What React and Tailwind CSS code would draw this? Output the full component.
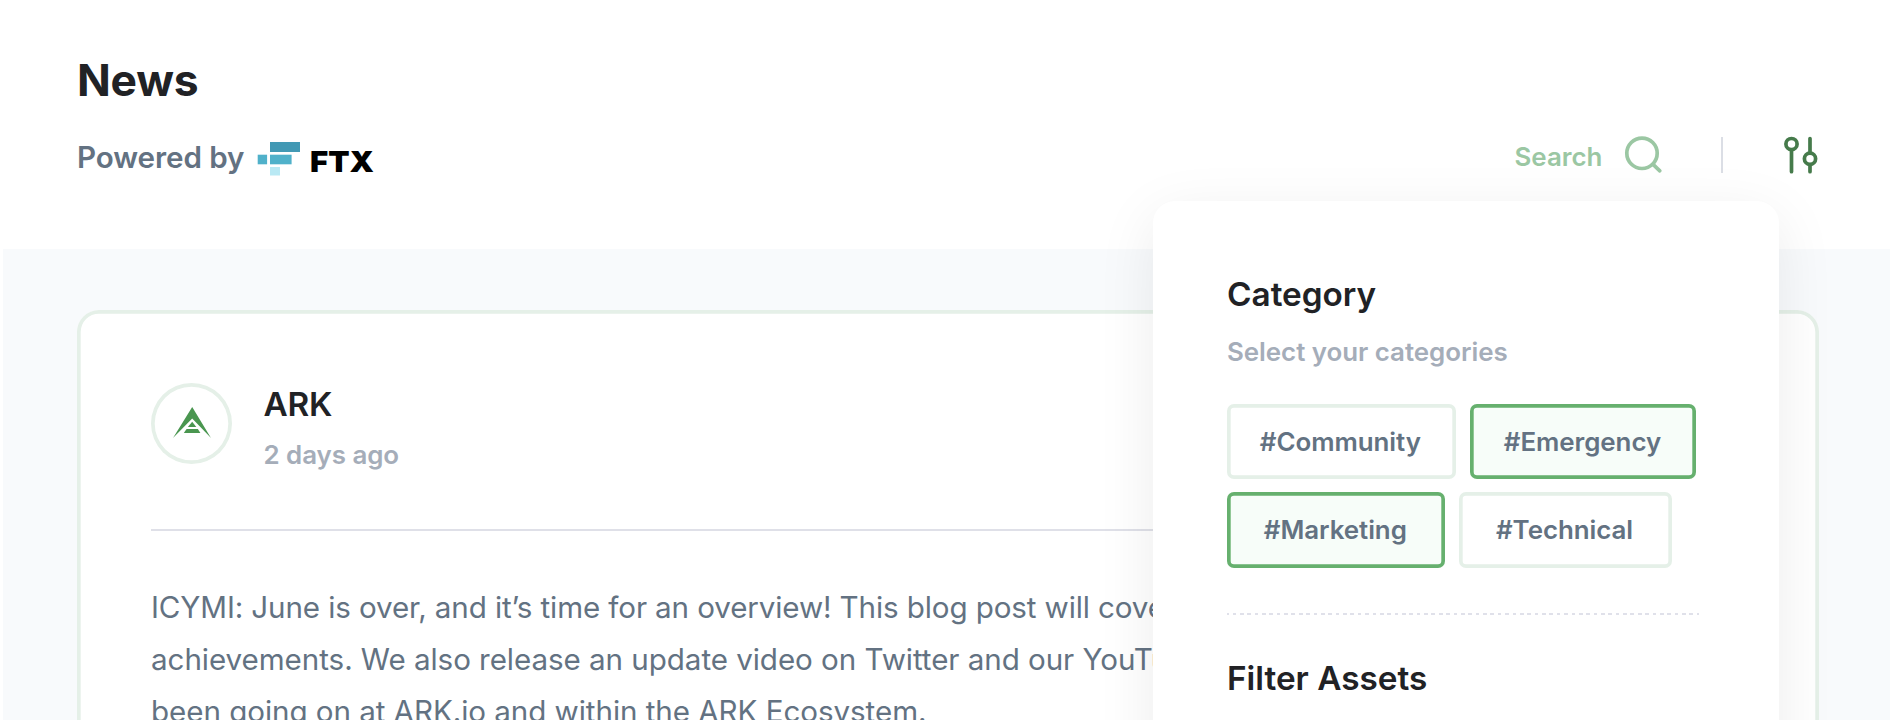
const categories = [
  { name: '#Community', active: false, width: 'w-[228.5px]', pad: 'pl-[32.8px]' },
  { name: '#Emergency', active: true, width: 'w-[225.5px]', pad: 'pl-[33.8px]' },
  { name: '#Marketing', active: true, width: 'w-[217.5px]', pad: 'pl-[36.8px]' },
  { name: '#Technical', active: false, width: 'w-[212.5px]', pad: 'pl-[37px]' },
];

function FtxLogo() {
  return (
    <svg className="shrink-0" width="124" height="40" viewBox="0 0 124 40">
      <rect x="13" y="3" width="30" height="10" fill="#4299b4" />
      <rect x="13" y="15.7" width="21.6" height="9.6" fill="#50b1ca" />
      <rect x="0.7" y="15.7" width="9.4" height="9.6" fill="#50b1ca" />
      <rect x="13" y="28" width="10" height="8.5" fill="#b9e9f4" />
      <text x="53" y="32.5" fontFamily="Inter, sans-serif" fontWeight="900" fontSize="29" textLength="64" lengthAdjust="spacingAndGlyphs" fill="#000">
        FTX
      </text>
    </svg>
  );
}

function SearchIcon() {
  return (
    <svg width="40" height="40" viewBox="0 0 40 40" fill="none" stroke="#9bc7a3" strokeWidth="3.7" strokeLinecap="round">
      <circle cx="19" cy="18.3" r="15.2" />
      <path d="M30.3 29.7 L36.8 35.8" />
    </svg>
  );
}

function FilterIcon() {
  return (
    <svg width="36" height="40" viewBox="0 0 36 40" fill="none" stroke="#467b4b" strokeWidth="3.7" strokeLinecap="round">
      <circle cx="8.5" cy="9.1" r="5.6" />
      <path d="M8.5 15 V36.7 M27 3.6 V18 M27 30 V36.7" />
      <circle cx="27" cy="23.8" r="5.6" />
    </svg>
  );
}

function ArkLogo() {
  return (
    <svg width="38" height="32" viewBox="0 0 38 32" fill="#4a9650">
      <path d="M19.2 0 L38 31 L19.2 11.6 L0 31 Z" />
      <path d="M19.2 14.8 L23.3 20 H14.9 Z" />
      <path d="M13.6 21.9 H24.9 L27.4 26 H10.8 Z" />
    </svg>
  );
}

function Chip({ name, active, width, pad }) {
  const look = active
    ? 'bg-[#f7fdf9] shadow-[inset_0_0_0_3.7px_#66b06e]'
    : 'bg-white shadow-[inset_0_0_0_3.7px_#e5f0e8]';
  return (
    <button className={`flex h-[75.7px] items-center rounded-[7px] text-left text-[25.9px] leading-[36px] font-semibold tracking-[-0.05px] text-[#637282] ${width} ${pad} ${look}`}>
      {name}
    </button>
  );
}

function FilterPanel() {
  return (
    <aside className="absolute top-[201px] left-[1153px] h-[700px] w-[626px] rounded-[22px] bg-white pt-[72px] pl-[74px] shadow-[0_15px_60px_rgba(0,0,0,0.08)]">
      <h2 className="text-[33.3px] leading-[42px] font-semibold text-[#212225]">Category</h2>
      <p className="mt-[19px] text-[25.9px] leading-[36px] font-semibold tracking-[-0.03px] text-[#a5adb9]">Select your categories</p>
      <div className="mt-[33.7px] flex w-[480px] flex-wrap gap-x-[14.5px] gap-y-[13px]">
        {categories.map((c) => (
          <Chip key={c.name} {...c} />
        ))}
      </div>
      <div className="mt-[45.4px] h-[2px] w-[472px] bg-[repeating-linear-gradient(90deg,#e0e1ea_0_1.8px,transparent_1.8px_5.5px,#e0e1ea_5.5px_7.37px)]" />
      <h2 className="mt-[41.4px] text-[33.3px] leading-[42px] font-semibold text-[#212225]">Filter Assets</h2>
    </aside>
  );
}

export default function App() {
  return (
    <div className="relative h-[720px] w-[1890px] overflow-hidden bg-white font-['Inter',sans-serif]">
      <header className="flex h-[249px] justify-between pt-[53px] pr-[71px] pl-[77px]">
        <div>
          <h1 className="text-[44.4px] leading-[54px] font-bold tracking-[-0.25px] text-[#212225]">News</h1>
          <div className="mt-[32px] flex">
            <span className="w-[180px] text-[29.6px] leading-[36px] font-semibold tracking-[-0.08px] whitespace-nowrap text-[#637282]">Powered by</span>
            <FtxLogo />
          </div>
        </div>
        <div className="mt-[82px] flex h-[40px]">
          <span className="mt-[4px] w-[108.5px] text-[25.9px] leading-[36px] font-semibold text-[#9bc7a3]">Search</span>
          <SearchIcon />
          <div className="mt-[2px] ml-[58px] h-[36px] w-[2px] bg-[#dbdee5]" />
          <div className="ml-[60px]">
            <FilterIcon />
          </div>
        </div>
      </header>
      <main className="ml-[3px] h-[471px] bg-[#f8fafc] pt-[61px] pl-[74px]">
        <article className="h-[600px] w-[1742px] rounded-[22px] bg-white px-[74px] pt-[73px] shadow-[inset_0_0_0_3.7px_#e5f0e8]">
          <div className="flex h-[146px]">
            <div className="flex size-[81.4px] items-center justify-center rounded-full pb-[1px] shadow-[inset_0_0_0_3.7px_#e5f0e8]">
              <ArkLogo />
            </div>
            <div className="ml-[31.2px]">
              <h2 className="text-[33.3px] leading-[42px] font-semibold tracking-[-0.2px] text-[#212225]">ARK</h2>
              <p className="mt-[11.5px] text-[25.9px] leading-[36px] font-semibold tracking-[-0.06px] text-[#a5adb9]">2 days ago</p>
            </div>
          </div>
          <div className="h-[2px] bg-[#dfe0e8]" />
          <div className="mt-[51px] text-[29.6px] leading-[51.8px] whitespace-nowrap text-[#637282]">
            <p className="tracking-[-0.12px]">ICYMI: June is over, and it’s time for an overview! This blog post will cover</p>
            <p className="tracking-[-0.06px]">achievements. We also release an update video on Twitter and our YouTube</p>
            <p className="tracking-[-0.06px]">been going on at ARK.io and within the ARK Ecosystem.</p>
          </div>
        </article>
      </main>
      <FilterPanel />
    </div>
  );
}
